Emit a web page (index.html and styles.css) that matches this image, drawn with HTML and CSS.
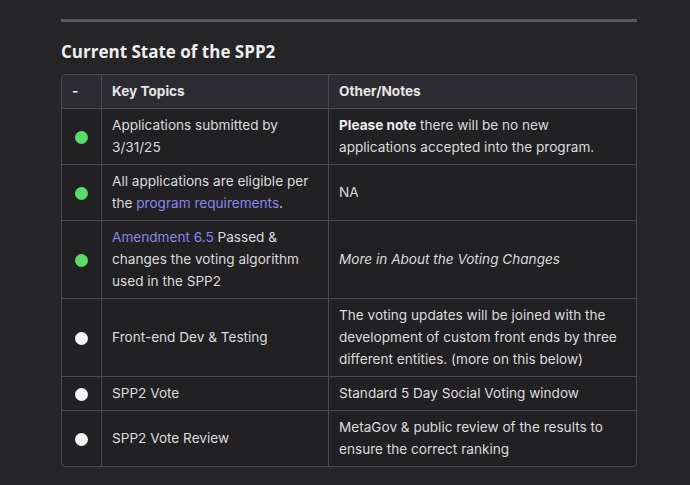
FILE: index.html
```html
<!DOCTYPE html>
<html>
<head>
<meta charset="utf-8">
<link rel="stylesheet" href="styles.css">
</head>
<body>
<main class="post">
  <hr class="rule">
  <h2 class="title">Current State of the SPP2</h2>
  <table class="state">
    <colgroup><col class="c1"><col class="c2"><col class="c3"></colgroup>
    <thead>
      <tr><th class="mark head-mark">-</th><th>Key Topics</th><th>Other/Notes</th></tr>
    </thead>
    <tbody>
      <tr>
        <td class="mark"><span class="dot green"></span></td>
        <td>Applications submitted by 3/31/25</td>
        <td><strong>Please note</strong> there will be no new applications accepted into the program.</td>
      </tr>
      <tr>
        <td class="mark"><span class="dot green"></span></td>
        <td>All applications are eligible per the <a href="#">program requirements</a>.</td>
        <td>NA</td>
      </tr>
      <tr>
        <td class="mark"><span class="dot green"></span></td>
        <td><a href="#">Amendment 6.5</a> Passed &amp; changes the voting algorithm used in the SPP2</td>
        <td><em>More in About the Voting Changes</em></td>
      </tr>
      <tr>
        <td class="mark"><span class="dot white"></span></td>
        <td>Front-end Dev &amp; Testing</td>
        <td>The voting updates will be joined with the development of custom front ends by three different entities. (more on this below)</td>
      </tr>
      <tr>
        <td class="mark"><span class="dot white"></span></td>
        <td>SPP2 Vote</td>
        <td>Standard 5 Day Social Voting window</td>
      </tr>
      <tr>
        <td class="mark"><span class="dot white"></span></td>
        <td>SPP2 Vote Review</td>
        <td>MetaGov &amp; public review of the results to ensure the correct ranking</td>
      </tr>
    </tbody>
  </table>
</main>
</body>
</html>
```
FILE: styles.css
```css
html, body {
  margin: 0;
  padding: 0;
  background: #252427;
}
body {
  font-family: Inter, "Noto Sans", sans-serif;
  color: #dcdcdc;
  font-size: 13.6px;
}
.post {
  width: 576px;
  padding: 19px 0 0 61px;
}
.rule {
  margin: 0;
  border: 0;
  height: 3px;
  background: #58575c;
}
.title {
  margin: 17px 0 0 0;
  font-family: "Open Sans", "DejaVu Sans", sans-serif;
  font-weight: 700;
  font-size: 17px;
  line-height: 26px;
  color: #eeeeee;
}
.state {
  margin-top: 9px;
  width: 576px;
  border-collapse: separate;
  border-spacing: 0;
  border: 1px solid #4a494e;
  border-radius: 4px;
  table-layout: fixed;
  background: #212023;
}
.c1 { width: 40px; }
.c2 { width: 227px; }
.c3 { width: auto; }
.state th, .state td {
  text-align: left;
  vertical-align: middle;
  padding: 5px 10px 6px 10px;
  line-height: 22px;
  border-right: 1px solid #4a494e;
  border-bottom: 1px solid #4a494e;
}
.state th:last-child, .state td:last-child { border-right: 0; }
.state tbody tr:last-child td { border-bottom: 0; }
.state thead th {
  background: #2c2b31;
  font-weight: 700;
  color: #e6e6e6;
}
.state thead th:first-child { border-top-left-radius: 3px; }
.state thead th:last-child { border-top-right-radius: 3px; }
.state .mark {
  text-align: center;
  padding: 5px 0 6px 0;
}
.state .head-mark {
  text-align: left;
  padding-left: 10px;
}
.state strong { color: #ececec; }
.state em { color: #dcdcdc; }
.state a {
  color: #8a85ee;
  text-decoration: none;
}
.dot {
  display: inline-block;
  width: 13px;
  height: 13px;
  border-radius: 50%;
  vertical-align: middle;
}
.dot.green { background: #5bdc66; }
.dot.white { background: #f4f4f4; }
```
